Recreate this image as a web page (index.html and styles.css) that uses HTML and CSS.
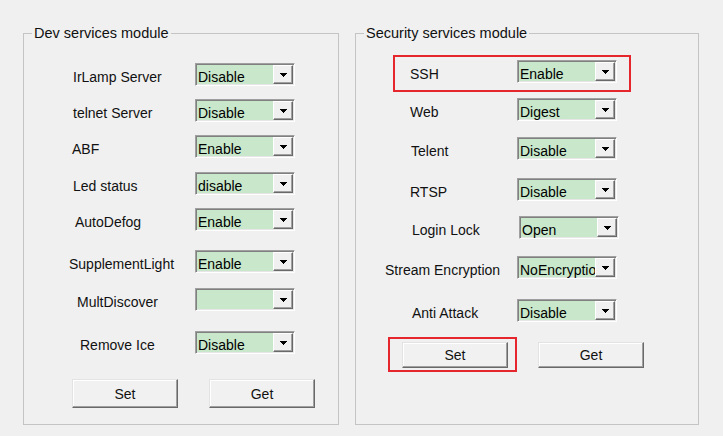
FILE: index.html
```html
<!DOCTYPE html>
<html>
<head>
<meta charset="utf-8">
<link rel="stylesheet" href="styles.css">
</head>
<body>
<div class="window">
  <fieldset class="group dev">
    <legend>Dev services module</legend>
    <div class="body">
      <div class="row"><span class="lbl">IrLamp Server</span><div class="combo"><span class="val">Disable</span><span class="drop"><svg width="7" height="4" viewBox="0 0 7 4"><path d="M0 0h7v1h-1v1h-1v1h-1v1h-1v-1h-1v-1h-1v-1h-1z"/></svg></span></div></div>
      <div class="row g13"><span class="lbl">telnet Server</span><div class="combo"><span class="val">Disable</span><span class="drop"><svg width="7" height="4" viewBox="0 0 7 4"><path d="M0 0h7v1h-1v1h-1v1h-1v1h-1v-1h-1v-1h-1v-1h-1z"/></svg></span></div></div>
      <div class="row g13"><span class="lbl in-1">ABF</span><div class="combo"><span class="val">Enable</span><span class="drop"><svg width="7" height="4" viewBox="0 0 7 4"><path d="M0 0h7v1h-1v1h-1v1h-1v1h-1v-1h-1v-1h-1v-1h-1z"/></svg></span></div></div>
      <div class="row g14"><span class="lbl">Led status</span><div class="combo"><span class="val">disable</span><span class="drop"><svg width="7" height="4" viewBox="0 0 7 4"><path d="M0 0h7v1h-1v1h-1v1h-1v1h-1v-1h-1v-1h-1v-1h-1z"/></svg></span></div></div>
      <div class="row g13"><span class="lbl in2">AutoDefog</span><div class="combo"><span class="val">Enable</span><span class="drop"><svg width="7" height="4" viewBox="0 0 7 4"><path d="M0 0h7v1h-1v1h-1v1h-1v1h-1v-1h-1v-1h-1v-1h-1z"/></svg></span></div></div>
      <div class="row g19"><span class="lbl in-4">SupplementLight</span><div class="combo"><span class="val">Enable</span><span class="drop"><svg width="7" height="4" viewBox="0 0 7 4"><path d="M0 0h7v1h-1v1h-1v1h-1v1h-1v-1h-1v-1h-1v-1h-1z"/></svg></span></div></div>
      <div class="row g15"><span class="lbl in4">MultDiscover</span><div class="combo"><span class="val">&nbsp;</span><span class="drop"><svg width="7" height="4" viewBox="0 0 7 4"><path d="M0 0h7v1h-1v1h-1v1h-1v1h-1v-1h-1v-1h-1v-1h-1z"/></svg></span></div></div>
      <div class="row g20"><span class="lbl in7">Remove Ice</span><div class="combo"><span class="val">Disable</span><span class="drop"><svg width="7" height="4" viewBox="0 0 7 4"><path d="M0 0h7v1h-1v1h-1v1h-1v1h-1v-1h-1v-1h-1v-1h-1z"/></svg></span></div></div>
      <div class="btns">
        <button class="btn">Set</button>
        <button class="btn">Get</button>
      </div>
    </div>
  </fieldset>
  <fieldset class="group sec">
    <legend>Security services module</legend>
    <div class="body">
      <div class="row hl"><span class="lbl">SSH</span><div class="combo"><span class="val">Enable</span><span class="drop"><svg width="7" height="4" viewBox="0 0 7 4"><path d="M0 0h7v1h-1v1h-1v1h-1v1h-1v-1h-1v-1h-1v-1h-1z"/></svg></span></div></div>
      <div class="row g15"><span class="lbl">Web</span><div class="combo"><span class="val">Digest</span><span class="drop"><svg width="7" height="4" viewBox="0 0 7 4"><path d="M0 0h7v1h-1v1h-1v1h-1v1h-1v-1h-1v-1h-1v-1h-1z"/></svg></span></div></div>
      <div class="row g16"><span class="lbl in1">Telent</span><div class="combo"><span class="val">Disable</span><span class="drop"><svg width="7" height="4" viewBox="0 0 7 4"><path d="M0 0h7v1h-1v1h-1v1h-1v1h-1v-1h-1v-1h-1v-1h-1z"/></svg></span></div></div>
      <div class="row g18"><span class="lbl">RTSP</span><div class="combo"><span class="val">Disable</span><span class="drop"><svg width="7" height="4" viewBox="0 0 7 4"><path d="M0 0h7v1h-1v1h-1v1h-1v1h-1v-1h-1v-1h-1v-1h-1z"/></svg></span></div></div>
      <div class="row g15 shift2"><span class="lbl">Login Lock</span><div class="combo"><span class="val">Open</span><span class="drop"><svg width="7" height="4" viewBox="0 0 7 4"><path d="M0 0h7v1h-1v1h-1v1h-1v1h-1v-1h-1v-1h-1v-1h-1z"/></svg></span></div></div>
      <div class="row g17"><span class="lbl wide">Stream Encryption</span><div class="combo"><span class="val">NoEncryption</span><span class="drop"><svg width="7" height="4" viewBox="0 0 7 4"><path d="M0 0h7v1h-1v1h-1v1h-1v1h-1v-1h-1v-1h-1v-1h-1z"/></svg></span></div></div>
      <div class="row g20"><span class="lbl in2">Anti Attack</span><div class="combo"><span class="val">Disable</span><span class="drop"><svg width="7" height="4" viewBox="0 0 7 4"><path d="M0 0h7v1h-1v1h-1v1h-1v1h-1v-1h-1v-1h-1v-1h-1z"/></svg></span></div></div>
      <div class="btns">
        <button class="btn hl-btn">Set</button>
        <button class="btn">Get</button>
      </div>
    </div>
  </fieldset>
</div>
</body>
</html>
```

FILE: styles.css
```css
* { box-sizing: border-box; }
html, body { margin: 0; padding: 0; }
body {
  background: #f0f0f0;
  font-family: "Liberation Sans", Arial, sans-serif;
  font-size: 14px;
  color: #111;
  width: 723px;
  height: 436px;
  overflow: hidden;
}
.window {
  display: flex;
  gap: 16px;
  padding: 25px 0 0 23px;
}
.group {
  margin: 0;
  padding: 0;
  border: 1px solid #c4c4c4;
  height: 400px;
  min-width: 0;
}
.group legend {
  margin-left: 8px;
  padding: 0 2px;
  line-height: 16px;
  font-size: 14.5px;
}
.dev { width: 316px; }
.sec { width: 344px; }

.dev .body { padding: 22px 0 0 49px; }
.sec .body { padding: 19px 0 0 54px; }

.row {
  display: flex;
  align-items: baseline;
  height: 23px;
  width: max-content;
}
.g13 { margin-top: 13px; }
.g14 { margin-top: 14px; }
.g15 { margin-top: 15px; }
.g16 { margin-top: 16px; }
.g17 { margin-top: 17px; }
.g18 { margin-top: 18px; }
.g19 { margin-top: 19px; }
.g20 { margin-top: 20px; }

.lbl {
  line-height: 16px;
  white-space: nowrap;
  flex: none;
}
.dev .lbl { width: 122px; }
.sec .lbl { width: 107px; }
.sec .lbl.wide { width: 132px; margin-left: -25px; }
.shift2 { margin-left: 2px; }
.in-1 { margin-left: -1px; }
.dev .lbl.in-1 { width: 123px; }
.in1 { padding-left: 1px; }
.in2 { padding-left: 2px; }
.in-4 { margin-left: -4px; }
.dev .lbl.in-4 { width: 126px; }
.in4 { padding-left: 4px; }
.in7 { padding-left: 7px; }

.combo {
  flex: none;
  width: 100px;
  height: 23px;
  display: flex;
  background: #c9e8cb;
  border: 1px solid;
  border-color: #a0a0a0 #ffffff #ffffff #a0a0a0;
  box-shadow: inset 1px 1px #808080, inset -1px -1px #e6e6e6;
}
.val {
  flex: 1;
  min-width: 0;
  overflow: hidden;
  white-space: nowrap;
  padding: 5px 0 0 2px;
  line-height: 16px;
  color: #000;
}
.drop {
  flex: none;
  width: 20px;
  margin: 1px 1px 1px 0;
  background: #f0f0f0;
  border: 1px solid;
  border-color: #ffffff #696969 #696969 #ffffff;
  box-shadow: inset -1px -1px #a0a0a0;
  display: flex;
  align-items: center;
  justify-content: center;
}
.drop svg { display: block; fill: #000; shape-rendering: crispEdges; }

.btns { display: flex; }
.dev .btns { margin: 25px 0 0 -1px; gap: 31px; }
.sec .btns { margin: 20px 0 0 -8px; gap: 30px; }
.btn {
  width: 106px;
  height: 29px;
  padding: 0;
  font: inherit;
  color: #111;
  background: #f1f1f1;
  border: 1px solid;
  border-color: #e3e3e3 #696969 #696969 #e3e3e3;
  box-shadow: inset -1px -1px #a0a0a0, inset 1px 1px #ffffff;
}
.sec .btn { height: 26px; }

.hl, .hl-btn { position: relative; }
.hl::after {
  content: "";
  position: absolute;
  left: -17px;
  right: -14px;
  top: -5px;
  bottom: -9px;
  border: 2px solid #e5262d;
  pointer-events: none;
}
.hl-btn::after {
  content: "";
  position: absolute;
  left: -15px;
  right: -10px;
  top: -6px;
  bottom: -5px;
  border: 2px solid #e5262d;
  pointer-events: none;
}
```
